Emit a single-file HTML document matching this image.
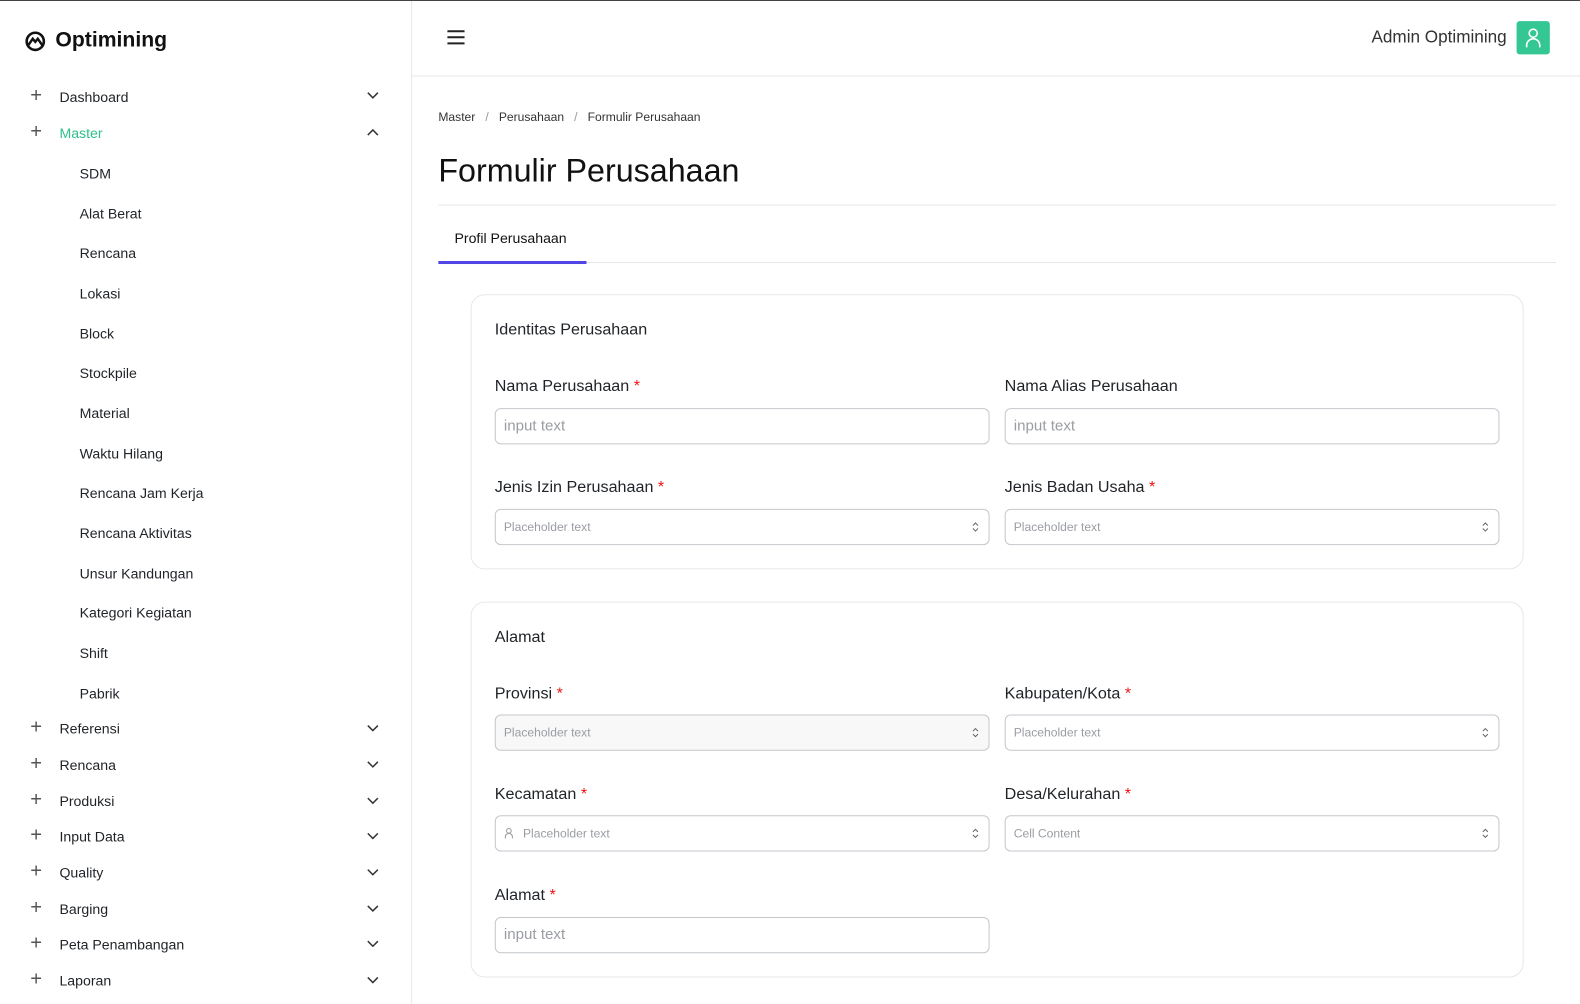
<!DOCTYPE html>
<html><head><meta charset="utf-8"><style>
*{box-sizing:border-box;margin:0;padding:0}
body{width:1580px;height:996px;overflow:hidden;background:#fff;font-family:"Liberation Sans",sans-serif;color:#1f2328;position:relative}
#w{position:absolute;left:0;top:0;width:1568px;height:988px;transform:scale(1.0077);transform-origin:0 0}
.a{position:absolute}
.topline{left:0;top:0;width:1580px;height:1px;background:#444}
.side{left:0;top:1px;width:409px;height:995px;border-right:1px solid #e5e7eb}
.nav{left:30px;font-size:14px;color:#1f2328;line-height:18px}
.nav .p{position:absolute;left:0;top:0;font-size:20px;color:#555;line-height:16px;font-weight:300}
.nav .t{position:absolute;left:29px;top:0;white-space:nowrap}
.chev{left:363px}
.sub{left:79px;font-size:14px;line-height:18px;color:#1f2328}
.hdr{left:409px;top:1px;width:1171px;height:75px;border-bottom:1px solid #e5e7eb}
.lbl{font-size:16px;color:#1f2328;line-height:20px}
.lbl b{color:#e11;font-weight:400}
.inp{height:36px;border:1px solid #c4c7cc;border-radius:6px;font-size:15px;color:#9a9da3;padding:0 8px;line-height:34px}
.sel{font-size:12px}
.card{border:1px solid #e5e7eb;border-radius:14px}
</style></head><body><div id="w">
<div class="a topline"></div>
<div class="a side"></div>
<svg class="a" style="left:24px;top:30px" width="22" height="22" viewBox="0 0 22 22"><circle cx="11" cy="11" r="8.5" fill="none" stroke="#111" stroke-width="2.6"/><path d="M4 15 L8.5 8.5 L11 11.5 L13.5 8.5 L18 15" fill="none" stroke="#111" stroke-width="2.4"/></svg>
<div class="a" style="left:55px;top:28px;font-size:21px;font-weight:700;color:#111">Optimining</div>

<div class="a nav" style="top:87px"><span class="p">+</span><span class="t">Dashboard</span></div>
<div class="a nav" style="top:123px"><span class="p">+</span><span class="t" style="color:#2fbf8a">Master</span></div>
<svg class="a chev" style="top:90px" width="14" height="10" viewBox="0 0 14 10"><path d="M2 2l5 5 5-5" fill="none" stroke="#333" stroke-width="1.5"/></svg>
<svg class="a chev" style="top:126px" width="14" height="10" viewBox="0 0 14 10"><path d="M2 8l5-5 5 5" fill="none" stroke="#333" stroke-width="1.5"/></svg>

<div class="a sub" style="top:163px">SDM</div>
<div class="a sub" style="top:203px">Alat Berat</div>
<div class="a sub" style="top:242px">Rencana</div>
<div class="a sub" style="top:282px">Lokasi</div>
<div class="a sub" style="top:322px">Block</div>
<div class="a sub" style="top:361px">Stockpile</div>
<div class="a sub" style="top:401px">Material</div>
<div class="a sub" style="top:441px">Waktu Hilang</div>
<div class="a sub" style="top:480px">Rencana Jam Kerja</div>
<div class="a sub" style="top:520px">Rencana Aktivitas</div>
<div class="a sub" style="top:560px">Unsur Kandungan</div>
<div class="a sub" style="top:599px">Kategori Kegiatan</div>
<div class="a sub" style="top:639px">Shift</div>
<div class="a sub" style="top:679px">Pabrik</div>

<div class="a nav" style="top:714px"><span class="p">+</span><span class="t">Referensi</span></div>
<div class="a nav" style="top:750px"><span class="p">+</span><span class="t">Rencana</span></div>
<div class="a nav" style="top:786px"><span class="p">+</span><span class="t">Produksi</span></div>
<div class="a nav" style="top:821px"><span class="p">+</span><span class="t">Input Data</span></div>
<div class="a nav" style="top:857px"><span class="p">+</span><span class="t">Quality</span></div>
<div class="a nav" style="top:893px"><span class="p">+</span><span class="t">Barging</span></div>
<div class="a nav" style="top:928px"><span class="p">+</span><span class="t">Peta Penambangan</span></div>
<div class="a nav" style="top:964px"><span class="p">+</span><span class="t">Laporan</span></div>
<svg class="a chev" style="top:718px" width="14" height="10" viewBox="0 0 14 10"><path d="M2 2l5 5 5-5" fill="none" stroke="#333" stroke-width="1.5"/></svg>
<svg class="a chev" style="top:754px" width="14" height="10" viewBox="0 0 14 10"><path d="M2 2l5 5 5-5" fill="none" stroke="#333" stroke-width="1.5"/></svg>
<svg class="a chev" style="top:790px" width="14" height="10" viewBox="0 0 14 10"><path d="M2 2l5 5 5-5" fill="none" stroke="#333" stroke-width="1.5"/></svg>
<svg class="a chev" style="top:825px" width="14" height="10" viewBox="0 0 14 10"><path d="M2 2l5 5 5-5" fill="none" stroke="#333" stroke-width="1.5"/></svg>
<svg class="a chev" style="top:861px" width="14" height="10" viewBox="0 0 14 10"><path d="M2 2l5 5 5-5" fill="none" stroke="#333" stroke-width="1.5"/></svg>
<svg class="a chev" style="top:897px" width="14" height="10" viewBox="0 0 14 10"><path d="M2 2l5 5 5-5" fill="none" stroke="#333" stroke-width="1.5"/></svg>
<svg class="a chev" style="top:932px" width="14" height="10" viewBox="0 0 14 10"><path d="M2 2l5 5 5-5" fill="none" stroke="#333" stroke-width="1.5"/></svg>
<svg class="a chev" style="top:968px" width="14" height="10" viewBox="0 0 14 10"><path d="M2 2l5 5 5-5" fill="none" stroke="#333" stroke-width="1.5"/></svg>

<div class="a hdr"></div>
<svg class="a" style="left:443px;top:29px" width="19" height="16" viewBox="0 0 19 16"><path d="M1 2h17M1 8h17M1 14h17" stroke="#222" stroke-width="2"/></svg>
<div class="a" style="left:1361px;top:27px;font-size:17px;color:#333">Admin Optimining</div>
<div class="a" style="left:1505px;top:21px;width:33px;height:33px;background:#34c794;border-radius:3px"></div>
<svg class="a" style="left:1505px;top:21px" width="33" height="33" viewBox="0 0 33 33"><circle cx="16.5" cy="12" r="4" fill="none" stroke="#fff" stroke-width="1.6"/><path d="M10 26v-2a6.5 6.5 0 0 1 13 0v2" fill="none" stroke="#fff" stroke-width="1.6"/></svg>

<div class="a" style="left:435px;top:109px;font-size:12px;color:#333">Master &nbsp;&nbsp;<span style="color:#999">/</span>&nbsp;&nbsp; Perusahaan &nbsp;&nbsp;<span style="color:#999">/</span>&nbsp;&nbsp; Formulir Perusahaan</div>
<div class="a" style="left:435px;top:151px;font-size:32px;color:#111">Formulir Perusahaan</div>
<div class="a" style="left:435px;top:203px;width:1109px;height:1px;background:#e5e7eb"></div>
<div class="a" style="left:451px;top:228px;font-size:14px;color:#111">Profil Perusahaan</div>
<div class="a" style="left:435px;top:260px;width:1109px;height:1px;background:#e5e7eb"></div>
<div class="a" style="left:435px;top:259px;width:147px;height:3px;background:#4f46e5"></div>

<div class="a card" style="left:467px;top:292px;width:1045px;height:273px"></div>
<div class="a lbl" style="left:491px;top:318px">Identitas Perusahaan</div>
<div class="a lbl" style="left:491px;top:374px">Nama Perusahaan <b>*</b></div>
<div class="a lbl" style="left:997px;top:374px">Nama Alias Perusahaan</div>
<div class="a inp" style="left:491px;top:405px;width:491px">input text</div>
<div class="a inp" style="left:997px;top:405px;width:491px">input text</div>
<div class="a lbl" style="left:491px;top:474px">Jenis Izin Perusahaan <b>*</b></div>
<div class="a lbl" style="left:997px;top:474px">Jenis Badan Usaha <b>*</b></div>
<div class="a inp sel" style="left:491px;top:505px;width:491px">Placeholder text</div>
<div class="a inp sel" style="left:997px;top:505px;width:491px">Placeholder text</div>

<div class="a card" style="left:467px;top:597px;width:1045px;height:373px"></div>
<div class="a lbl" style="left:491px;top:623px">Alamat</div>
<div class="a lbl" style="left:491px;top:679px">Provinsi <b>*</b></div>
<div class="a lbl" style="left:997px;top:679px">Kabupaten/Kota <b>*</b></div>
<div class="a inp sel" style="left:491px;top:709px;width:491px;background:#f8f8f9">Placeholder text</div>
<div class="a inp sel" style="left:997px;top:709px;width:491px">Placeholder text</div>
<div class="a lbl" style="left:491px;top:779px">Kecamatan <b>*</b></div>
<div class="a lbl" style="left:997px;top:779px">Desa/Kelurahan <b>*</b></div>
<div class="a inp sel" style="left:491px;top:809px;width:491px;padding-left:27px">Placeholder text</div>
<svg class="a" style="left:500px;top:821px" width="10" height="12" viewBox="0 0 10 12"><circle cx="5" cy="3.5" r="2.3" fill="none" stroke="#999" stroke-width="1"/><path d="M1.5 11v-1.5a3.5 3.5 0 0 1 7 0V11" fill="none" stroke="#999" stroke-width="1"/></svg>
<div class="a inp sel" style="left:997px;top:809px;width:491px">Cell Content</div>
<div class="a lbl" style="left:491px;top:879px">Alamat <b>*</b></div>
<div class="a inp" style="left:491px;top:910px;width:491px">input text</div>

<svg class="a" style="left:964px;top:517px" width="8" height="12" viewBox="0 0 8 12"><path d="M1.5 4.5L4 2l2.5 2.5M1.5 7.5L4 10l2.5-2.5" fill="none" stroke="#666" stroke-width="1"/></svg>
<svg class="a" style="left:1470px;top:517px" width="8" height="12" viewBox="0 0 8 12"><path d="M1.5 4.5L4 2l2.5 2.5M1.5 7.5L4 10l2.5-2.5" fill="none" stroke="#666" stroke-width="1"/></svg>
<svg class="a" style="left:964px;top:721px" width="8" height="12" viewBox="0 0 8 12"><path d="M1.5 4.5L4 2l2.5 2.5M1.5 7.5L4 10l2.5-2.5" fill="none" stroke="#666" stroke-width="1"/></svg>
<svg class="a" style="left:1470px;top:721px" width="8" height="12" viewBox="0 0 8 12"><path d="M1.5 4.5L4 2l2.5 2.5M1.5 7.5L4 10l2.5-2.5" fill="none" stroke="#666" stroke-width="1"/></svg>
<svg class="a" style="left:964px;top:821px" width="8" height="12" viewBox="0 0 8 12"><path d="M1.5 4.5L4 2l2.5 2.5M1.5 7.5L4 10l2.5-2.5" fill="none" stroke="#666" stroke-width="1"/></svg>
<svg class="a" style="left:1470px;top:821px" width="8" height="12" viewBox="0 0 8 12"><path d="M1.5 4.5L4 2l2.5 2.5M1.5 7.5L4 10l2.5-2.5" fill="none" stroke="#666" stroke-width="1"/></svg>
</div></body></html>
